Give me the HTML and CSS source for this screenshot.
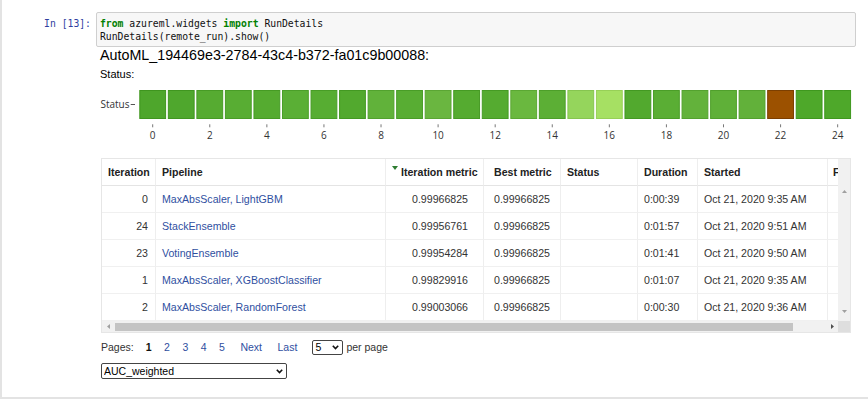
FILE: index.html
```html
<!DOCTYPE html>
<html lang="en">
<head>
<meta charset="utf-8">
<title>RunDetails</title>
<link rel="stylesheet" href="styles.css">
</head>
<body>
<div class="notebook">
  <div class="cell">
    <div class="prompt">In&nbsp;[13]:</div>
    <div class="code"><pre><span class="kw">from</span> azureml.widgets <span class="kw">import</span> RunDetails
RunDetails(remote_run).show()</pre></div>
  </div>

  <div class="output">
    <div class="run-title">AutoML_194469e3-2784-43c4-b372-fa01c9b00088:</div>
    <div class="status-label">Status:</div>

    <svg class="timeline" width="760" height="64" viewBox="0 0 760 64">
      <text class="axis-label" x="29.5" y="27.3" text-anchor="end">Status</text>
      <line x1="30.7" y1="23.5" x2="35" y2="23.5" class="axis-tick"/>
      <g class="cells">
        <rect x="39.8" y="9.5" width="25.8" height="28" fill="#4ea62c" stroke="#3f951f"/>
        <rect x="68.34" y="9.5" width="25.8" height="28" fill="#4fa72d" stroke="#409620"/>
        <rect x="96.88" y="9.5" width="25.8" height="28" fill="#56ab31" stroke="#479b25"/>
        <rect x="125.42" y="9.5" width="25.8" height="28" fill="#58ad33" stroke="#499d27"/>
        <rect x="153.96" y="9.5" width="25.8" height="28" fill="#55ab30" stroke="#469b24"/>
        <rect x="182.5" y="9.5" width="25.8" height="28" fill="#5aaf35" stroke="#4b9f29"/>
        <rect x="211.04" y="9.5" width="25.8" height="28" fill="#57ad32" stroke="#489d26"/>
        <rect x="239.58" y="9.5" width="25.8" height="28" fill="#52a92e" stroke="#439922"/>
        <rect x="268.12" y="9.5" width="25.8" height="28" fill="#61b23a" stroke="#52a22e"/>
        <rect x="296.66" y="9.5" width="25.8" height="28" fill="#58ad33" stroke="#499d27"/>
        <rect x="325.2" y="9.5" width="25.8" height="28" fill="#6ab640" stroke="#5ba634"/>
        <rect x="353.74" y="9.5" width="25.8" height="28" fill="#55ab30" stroke="#469b24"/>
        <rect x="382.28" y="9.5" width="25.8" height="28" fill="#55ab30" stroke="#469b24"/>
        <rect x="410.82" y="9.5" width="25.8" height="28" fill="#6ab83f" stroke="#5ba833"/>
        <rect x="439.36" y="9.5" width="25.8" height="28" fill="#5caf35" stroke="#4d9f29"/>
        <rect x="467.9" y="9.5" width="25.8" height="28" fill="#95d55c" stroke="#86c550"/>
        <rect x="496.44" y="9.5" width="25.8" height="28" fill="#a6e063" stroke="#97d057"/>
        <rect x="524.98" y="9.5" width="25.8" height="28" fill="#52a92e" stroke="#439922"/>
        <rect x="553.52" y="9.5" width="25.8" height="28" fill="#5aae34" stroke="#4b9e28"/>
        <rect x="582.06" y="9.5" width="25.8" height="28" fill="#63b23b" stroke="#54a22f"/>
        <rect x="610.6" y="9.5" width="25.8" height="28" fill="#5fb038" stroke="#50a02c"/>
        <rect x="639.14" y="9.5" width="25.8" height="28" fill="#62b13a" stroke="#53a12e"/>
        <rect x="667.68" y="9.5" width="25.8" height="28" fill="#9c5100" stroke="#7c3f00"/>
        <rect x="696.22" y="9.5" width="25.8" height="28" fill="#4ea82a" stroke="#3f981e"/>
        <rect x="724.76" y="9.5" width="25.8" height="28" fill="#4ea82a" stroke="#3f981e"/>
      </g>
      <g class="ticks">
        <line x1="52.7" y1="43.3" x2="52.7" y2="46.3"/>
        <line x1="109.78" y1="43.3" x2="109.78" y2="46.3"/>
        <line x1="166.86" y1="43.3" x2="166.86" y2="46.3"/>
        <line x1="223.94" y1="43.3" x2="223.94" y2="46.3"/>
        <line x1="281.02" y1="43.3" x2="281.02" y2="46.3"/>
        <line x1="338.1" y1="43.3" x2="338.1" y2="46.3"/>
        <line x1="395.18" y1="43.3" x2="395.18" y2="46.3"/>
        <line x1="452.26" y1="43.3" x2="452.26" y2="46.3"/>
        <line x1="509.34" y1="43.3" x2="509.34" y2="46.3"/>
        <line x1="566.42" y1="43.3" x2="566.42" y2="46.3"/>
        <line x1="623.5" y1="43.3" x2="623.5" y2="46.3"/>
        <line x1="680.58" y1="43.3" x2="680.58" y2="46.3"/>
        <line x1="737.66" y1="43.3" x2="737.66" y2="46.3"/>
      </g>
      <g class="tick-labels" text-anchor="middle">
        <text x="52.7" y="58">0</text>
        <text x="109.78" y="58">2</text>
        <text x="166.86" y="58">4</text>
        <text x="223.94" y="58">6</text>
        <text x="281.02" y="58">8</text>
        <text x="338.1" y="58">10</text>
        <text x="395.18" y="58">12</text>
        <text x="452.26" y="58">14</text>
        <text x="509.34" y="58">16</text>
        <text x="566.42" y="58">18</text>
        <text x="623.5" y="58">20</text>
        <text x="680.58" y="58">22</text>
        <text x="737.66" y="58">24</text>
      </g>
    </svg>

    <div class="grid">
      <div class="grid-main">
        <div class="viewport">
          <table class="runs">
            <colgroup>
              <col class="c-iter"><col class="c-pipe"><col class="c-metric"><col class="c-best"><col class="c-status"><col class="c-dur"><col class="c-start"><col class="c-fin">
            </colgroup>
            <thead>
              <tr>
                <th class="num">Iteration</th>
                <th>Pipeline</th>
                <th class="num"><span class="sort"></span>Iteration metric</th>
                <th class="best">Best metric</th>
                <th>Status</th>
                <th>Duration</th>
                <th>Started</th>
                <th class="fin">Finished</th>
              </tr>
            </thead>
            <tbody>
              <tr>
                <td class="num">0</td>
                <td><a href="#">MaxAbsScaler, LightGBM</a></td>
                <td class="num metric">0.99966825</td>
                <td class="best">0.99966825</td>
                <td></td>
                <td>0:00:39</td>
                <td>Oct 21, 2020 9:35 AM</td>
                <td class="fin"></td>
              </tr>
              <tr>
                <td class="num">24</td>
                <td><a href="#">StackEnsemble</a></td>
                <td class="num metric">0.99956761</td>
                <td class="best">0.99966825</td>
                <td></td>
                <td>0:01:57</td>
                <td>Oct 21, 2020 9:51 AM</td>
                <td class="fin"></td>
              </tr>
              <tr>
                <td class="num">23</td>
                <td><a href="#">VotingEnsemble</a></td>
                <td class="num metric">0.99954284</td>
                <td class="best">0.99966825</td>
                <td></td>
                <td>0:01:41</td>
                <td>Oct 21, 2020 9:50 AM</td>
                <td class="fin"></td>
              </tr>
              <tr>
                <td class="num">1</td>
                <td><a href="#">MaxAbsScaler, XGBoostClassifier</a></td>
                <td class="num metric">0.99829916</td>
                <td class="best">0.99966825</td>
                <td></td>
                <td>0:01:07</td>
                <td>Oct 21, 2020 9:35 AM</td>
                <td class="fin"></td>
              </tr>
              <tr>
                <td class="num">2</td>
                <td><a href="#">MaxAbsScaler, RandomForest</a></td>
                <td class="num metric">0.99003066</td>
                <td class="best">0.99966825</td>
                <td></td>
                <td>0:00:30</td>
                <td>Oct 21, 2020 9:36 AM</td>
                <td class="fin"></td>
              </tr>
            </tbody>
          </table>
        </div>
        <div class="vscroll">
          <svg width="5" height="3" viewBox="0 0 5 3"><polygon points="0,3 2.5,0 5,3" fill="#a0a0a0"/></svg>
          <svg width="5" height="3" viewBox="0 0 5 3"><polygon points="0,0 2.5,3 5,0" fill="#a0a0a0"/></svg>
        </div>
      </div>
      <div class="hscroll">
        <div class="hbar">
          <span class="arrow-btn"><svg width="3" height="5" viewBox="0 0 3 5"><polygon points="3,0 0,2.5 3,5" fill="#a0a0a0"/></svg></span>
          <span class="thumb"></span>
          <span class="arrow-btn right"><svg width="3" height="5" viewBox="0 0 3 5"><polygon points="0,0 3,2.5 0,5" fill="#505050"/></svg></span>
        </div>
        <div class="corner"></div>
      </div>
    </div>

    <div class="pager">
      <span class="pager-label">Pages:</span>
      <span class="page current">1</span>
      <a class="page" href="#">2</a>
      <a class="page" href="#">3</a>
      <a class="page" href="#">4</a>
      <a class="page" href="#">5</a>
      <a class="page word" href="#">Next</a>
      <a class="page word" href="#">Last</a>
      <span class="select-wrap per-page">
        <select><option>5</option></select>
        <svg class="chev" width="7" height="5" viewBox="0 0 7 5"><polyline points="0.8,0.8 3.5,3.6 6.2,0.8" fill="none" stroke="#111" stroke-width="1.6"/></svg>
      </span>
      <span class="per-label">per page</span>
    </div>

    <div class="select-wrap metric-select">
      <select><option>AUC_weighted</option></select>
      <svg class="chev" width="7" height="5" viewBox="0 0 7 5"><polyline points="0.8,0.8 3.5,3.6 6.2,0.8" fill="none" stroke="#111" stroke-width="1.6"/></svg>
    </div>
  </div>
</div>
</body>
</html>
```

FILE: styles.css
```css
* {
  box-sizing: border-box;
}

body {
  margin: 0;
  background: #ffffff;
  font-family: "Liberation Sans", Arial, sans-serif;
  color: #000;
}

.notebook {
  height: 399px;
  border-left: 2px solid #e3e3e3;
  border-bottom: 2px solid #e3e3e3;
  padding-top: 12px;
}

/* code cell */
.cell {
  display: flex;
}

.prompt {
  width: 89px;
  margin-right: 5px;
  padding-top: 5px;
  text-align: right;
  font: 9.75px/13px "DejaVu Sans Mono", monospace;
  color: #303f9f;
}

.code {
  width: 760px;
  height: 35px;
  border: 1px solid #cfcfcf;
  border-radius: 2px;
  background: #f7f7f7;
  padding: 4px 3px 3px 3px;
}

.code pre {
  margin: 0;
  font: 9.75px/13px "DejaVu Sans Mono", monospace;
  color: #111;
}

.kw {
  color: #008000;
  font-weight: bold;
}

/* output */
.output {
  margin-left: 98px;
}

.run-title {
  font-size: 14.3px;
  line-height: 17px;
}

.status-label {
  margin-top: 4px;
  font-size: 11px;
  line-height: 13px;
}

.timeline {
  display: block;
}

.timeline text {
  font-family: "Open Sans", "DejaVu Sans", sans-serif;
  font-size: 10px;
  fill: #333;
}

.axis-tick {
  stroke: #555;
  stroke-width: 1;
}

.ticks line {
  stroke: #777;
  stroke-width: 1;
}

/* grid */
.grid {
  margin-top: 13px;
  margin-left: 1px;
  width: 750px;
  border: 1px solid #e6e6e6;
}

.grid-main {
  display: flex;
}

.viewport {
  width: 736px;
  overflow: hidden;
}

.vscroll {
  width: 12px;
  background: #f1f1f1;
  display: flex;
  flex-direction: column;
  justify-content: space-between;
  align-items: center;
  padding: 31px 0 8px;
}

.vscroll svg {
  display: block;
}

.runs {
  border-collapse: separate;
  border-spacing: 0;
  table-layout: fixed;
  width: 876px;
  font-size: 10.6px;
  color: #333;
}

.c-iter { width: 54px; }
.c-pipe { width: 230px; }
.c-metric { width: 98px; }
.c-best { width: 77px; }
.c-status { width: 77px; }
.c-dur { width: 60px; }
.c-start { width: 130px; }
.c-fin { width: 150px; }

.runs tr {
  height: 27px;
}

.runs th,
.runs td {
  padding: 0 6px;
  border-right: 1px solid #eeeeee;
  white-space: nowrap;
  overflow: hidden;
  text-align: left;
  vertical-align: middle;
}

.runs th {
  font-weight: bold;
  color: #222;
  border-bottom: 1px solid #e4e4e4;
}

.runs td {
  border-bottom: 1px solid #f0f0f0;
}

.runs .num {
  text-align: right;
  padding-right: 7px;
}

.runs td.metric {
  padding-right: 15px;
}

.runs .best {
  padding-left: 10px;
}

.runs .fin {
  padding-left: 5px;
}

.runs a {
  color: #2f4f9f;
  text-decoration: none;
}

.sort {
  display: inline-block;
  width: 0;
  height: 0;
  border-left: 3px solid transparent;
  border-right: 3px solid transparent;
  border-top: 4px solid #2e7d32;
  vertical-align: 6px;
  margin-right: 3px;
}

.hscroll {
  display: flex;
  height: 11px;
}

.hbar {
  width: 736px;
  display: flex;
  align-items: center;
  background: #f1f1f1;
}

.arrow-btn {
  width: 12px;
  height: 11px;
  display: flex;
  align-items: center;
  justify-content: center;
}

.arrow-btn svg {
  display: block;
}

.thumb {
  margin-left: 1px;
  width: 678px;
  height: 8px;
  background: #c4c4c4;
}

.arrow-btn.right {
  margin-left: auto;
}

.corner {
  width: 12px;
  background: #dedede;
}

/* pager */
.pager {
  margin-top: 5px;
  margin-left: 1px;
  height: 18px;
  display: flex;
  align-items: center;
  font-size: 10.5px;
  color: #333;
}

.page {
  margin-left: 12.5px;
  color: #2f4f9f;
  text-decoration: none;
}

.page.current {
  color: #111;
  font-weight: bold;
  margin-left: 12px;
}

.page.word {
  margin-left: 15.5px;
}

.select-wrap {
  position: relative;
  display: inline-block;
}

.select-wrap select {
  appearance: none;
  -webkit-appearance: none;
  display: block;
  margin: 0;
  border: 1px solid #444;
  border-radius: 2px;
  background: #fff;
  font-family: "Liberation Sans", Arial, sans-serif;
  font-size: 10.5px;
  color: #000;
  padding: 0 0 0 2px;
}

.select-wrap .chev {
  position: absolute;
  top: 50%;
  margin-top: -2px;
  pointer-events: none;
}

.per-page {
  margin-left: 15px;
}

.per-page select {
  width: 31px;
  height: 15px;
  line-height: 13px;
}

.per-page .chev {
  right: 4px;
}

.per-label {
  margin-left: 3px;
}

.metric-select {
  display: block;
  margin-top: 7px;
  margin-left: 1px;
  width: 186px;
}

.metric-select select {
  width: 186px;
  height: 16px;
  line-height: 14px;
}

.metric-select .chev {
  right: 4px;
}
```
